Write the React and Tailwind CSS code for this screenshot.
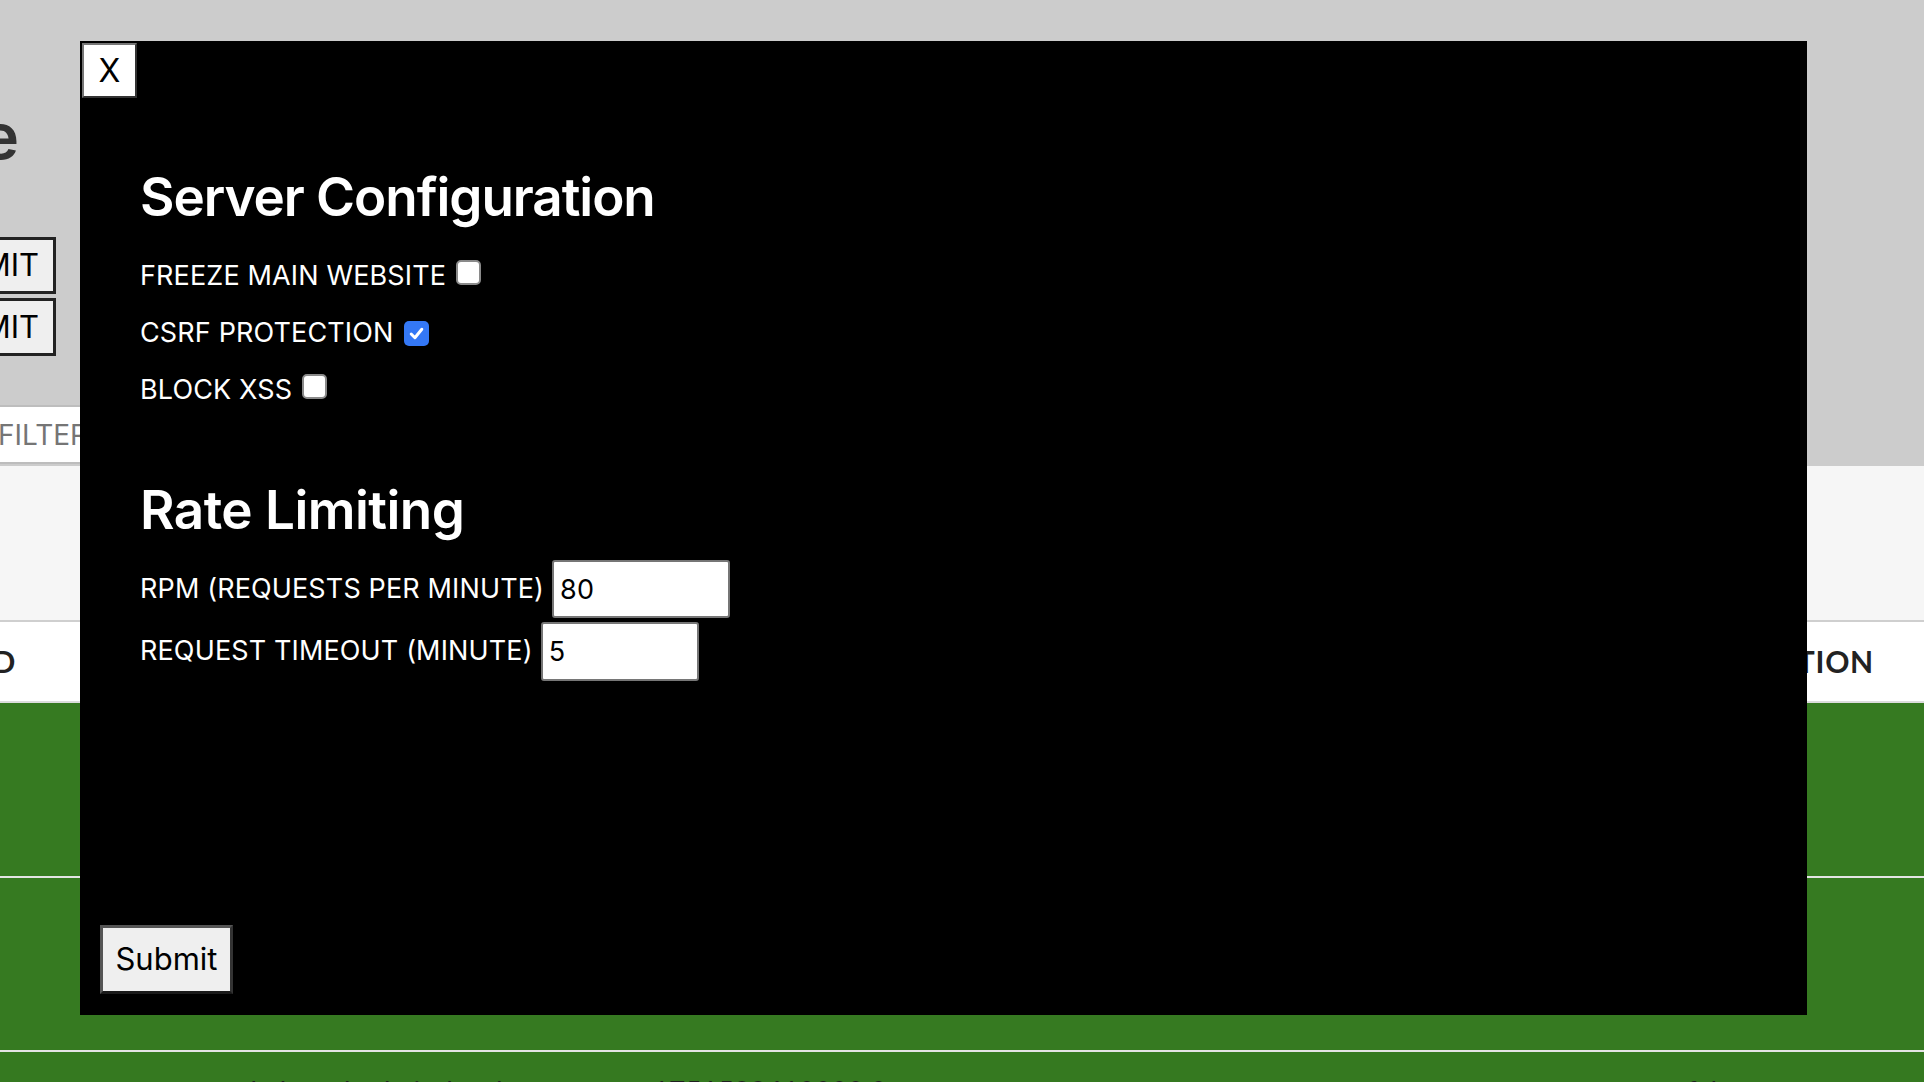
import React from "react";

const Check = ({ checked }) => (
  <div
    className={
      "ml-[10px] w-[25px] h-[25px] rounded-[5px] flex items-center justify-center shrink-0 " +
      (checked ? "bg-[#3478f6]" : "bg-white border-[2px] border-[#8a8a8a]")
    }
  >
    {checked && (
      <svg width="17" height="17" viewBox="0 0 16 16">
        <path d="M3 8.5 L6.5 12 L13 4" fill="none" stroke="white" strokeWidth="2.8" strokeLinecap="round" strokeLinejoin="round" />
      </svg>
    )}
  </div>
);

const App = () => {
  return (
    <div className="relative w-[1924px] h-[1082px] overflow-hidden bg-[#cccccc] font-['Inter',sans-serif]">
      {/* page behind the modal */}
      <div className="h-[466px] flex flex-col">
        <div className="mt-[98px] h-[76px] w-[19px] overflow-hidden flex justify-end items-center">
          <h1 className="shrink-0 whitespace-nowrap text-[64px] font-semibold text-[#333]">Admin Page</h1>
        </div>
        <div className="mt-[63px] w-[56px] overflow-hidden flex flex-col items-end gap-[4px]">
          <button className="shrink-0 h-[57px] px-[14px] bg-[#efefef] border-[3px] border-[#222] text-[31px] text-black whitespace-nowrap">
            SUBMIT
          </button>
          <button className="shrink-0 h-[58px] px-[14px] bg-[#efefef] border-[3px] border-[#222] text-[31px] text-black whitespace-nowrap">
            SUBMIT
          </button>
        </div>
        <div className="mt-[49px] h-[59px] w-[120px] bg-white border-y-2 border-[#bdbdbd] flex items-center overflow-hidden">
          <span className="-ml-[2px] text-[28px] text-[#757575]">FILTER</span>
        </div>
      </div>
      <div className="h-[156px] bg-[#f6f6f6] border-b-2 border-[#cfcfcf]"></div>
      <div className="h-[81px] bg-white border-b-2 border-[#dcdcdc] flex items-center justify-between pr-[50px] font-['Lato',sans-serif] font-bold text-[30px] text-[#222] tracking-wide">
        <div className="w-[16px] overflow-hidden flex justify-end">
          <span className="shrink-0">ID</span>
        </div>
        <span>ACTION</span>
      </div>
      <div className="h-[175px] bg-[#367a21] border-b-2 border-[#e4e4e4]"></div>
      <div className="h-[174px] bg-[#367a21] border-b-2 border-[#e4e4e4]"></div>
      <div className="h-[80px] bg-[#357920] flex items-start pt-[18px] font-['Lato',sans-serif] text-[28px] text-[#1f1f1f]">
        <span className="ml-[220px]">nekoboard-admin-local</span>
        <span className="ml-[150px]">1751599610000.0</span>
        <span className="ml-auto mr-[180px]">false</span>
      </div>

      {/* modal */}
      <div className="absolute left-[80px] top-[40.5px] w-[1727px] h-[974.5px] bg-black text-white flex flex-col">
        <button className="ml-[2px] mt-[2.5px] w-[55px] h-[55px] bg-white border-2 border-[#767676] border-b-[#333] border-r-[#333] text-black text-[32px] leading-none">
          X
        </button>
        <div className="pl-[60px] flex flex-col">
          <h2 className="mt-[69px] text-[53px] leading-[60px] font-semibold tracking-[-0.02em]">Server Configuration</h2>
          <div className="mt-[20px] flex flex-col text-[27px] leading-[57px] tracking-[0.005em]">
            <div className="flex items-baseline">
              <span>FREEZE MAIN WEBSITE</span>
              <Check />
            </div>
            <div className="flex items-baseline">
              <span>CSRF PROTECTION</span>
              <Check checked />
            </div>
            <div className="flex items-baseline">
              <span>BLOCK XSS</span>
              <Check />
            </div>
          </div>
          <h2 className="mt-[62px] text-[53px] leading-[60px] font-semibold tracking-[-0.01em]">Rate Limiting</h2>
          <div className="mt-[20px] flex flex-col gap-[4px] text-[27px] tracking-[0.005em]">
            <div className="flex items-center">
              <span>RPM (REQUESTS PER MINUTE)</span>
              <input
                defaultValue="80"
                className="ml-[8px] w-[178px] h-[58px] bg-white text-black border-2 border-[#767676] rounded-[3px] px-[6px] text-[27px] outline-none"
              />
            </div>
            <div className="flex items-center">
              <span>REQUEST TIMEOUT (MINUTE)</span>
              <input
                defaultValue="5"
                className="ml-[8px] w-[158px] h-[59px] bg-white text-black border-2 border-[#767676] rounded-[3px] px-[6px] text-[27px] outline-none"
              />
            </div>
          </div>
        </div>
        <button className="mt-auto mb-[21px] ml-[20px] self-start w-[133px] h-[69px] bg-[#efefef] border-[3px] border-[#555] border-b-[#1a1a1a] border-r-[#333] text-black text-[31px]">
          Submit
        </button>
      </div>
    </div>
  );
};

export default App;
